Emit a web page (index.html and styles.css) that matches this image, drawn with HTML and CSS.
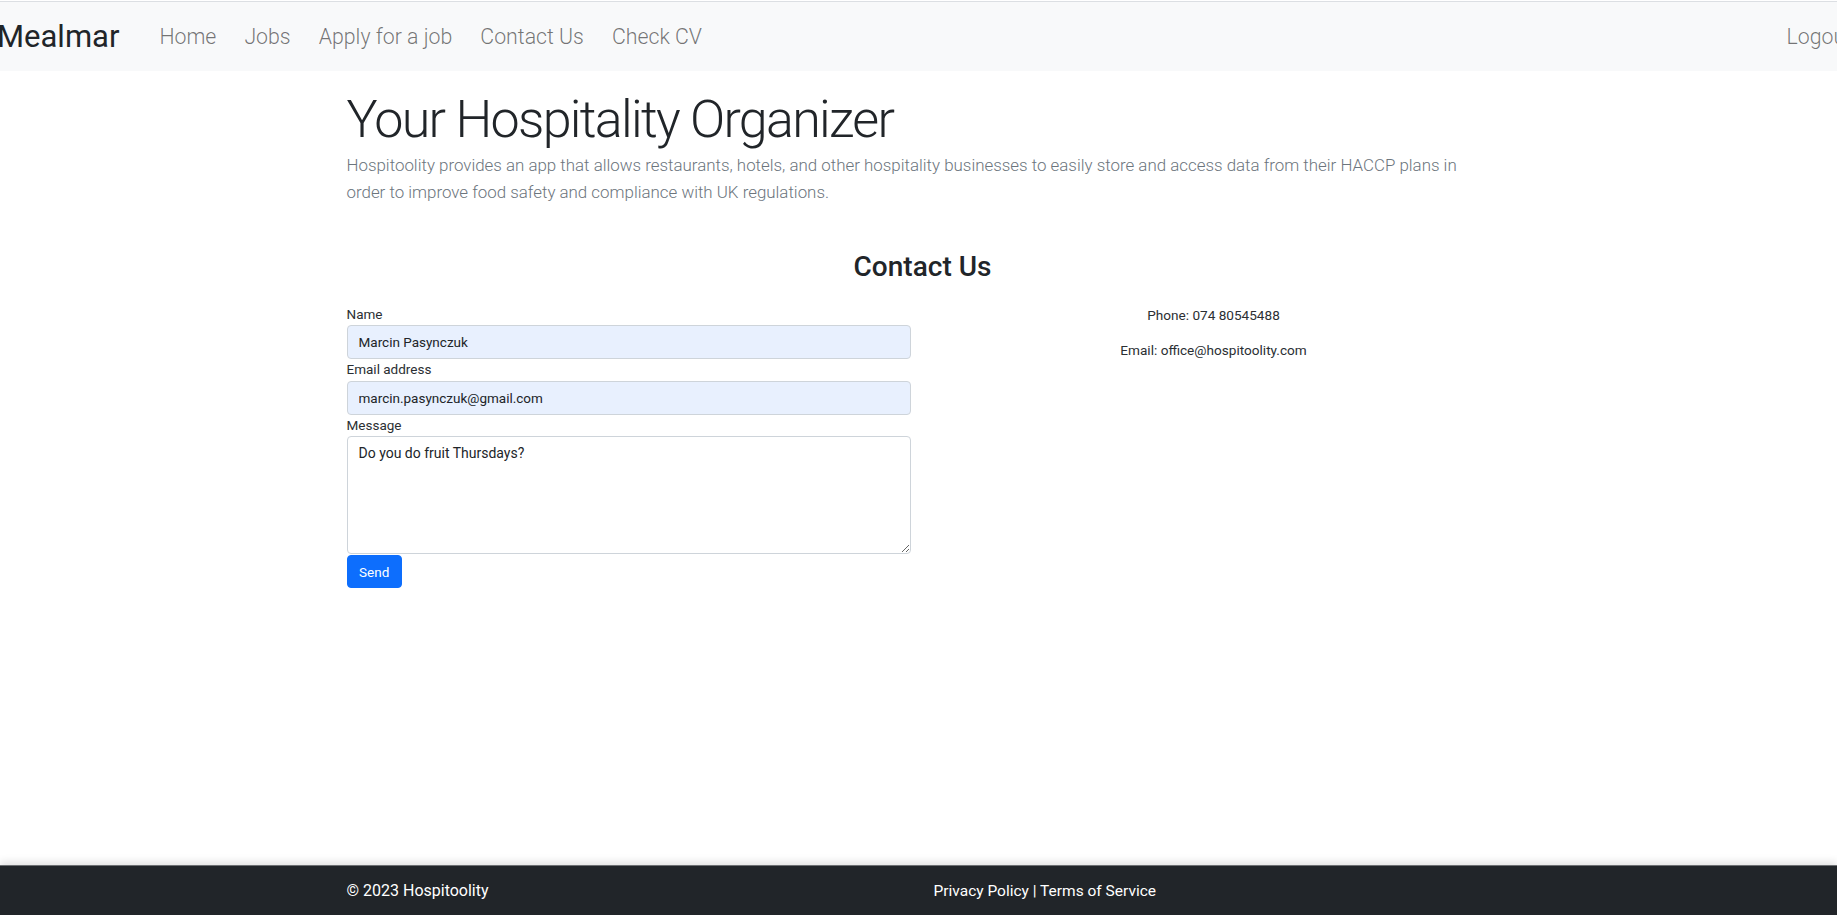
FILE: index.html
```html
<!DOCTYPE html>
<html lang="en">
<head>
<meta charset="utf-8">
<title>Hospitoolity - Contact Us</title>
<link rel="stylesheet" href="styles.css">
</head>
<body>
<nav class="navbar">
  <div class="nav-inner">
    <a class="brand" href="#">Mealmar</a>
    <ul class="nav-links">
      <li><a href="#">Home</a></li>
      <li><a href="#">Jobs</a></li>
      <li><a href="#">Apply for a job</a></li>
      <li><a href="#">Contact Us</a></li>
      <li><a href="#">Check CV</a></li>
    </ul>
    <a class="logout" href="#">Logout</a>
  </div>
</nav>

<main class="container">
  <header class="hero">
    <h1 class="hero-title">Your Hospitality Organizer</h1>
    <p class="lead">Hospitoolity provides an app that allows restaurants, hotels, and other hospitality businesses to easily store and access data from their HACCP plans in<br>order to improve food safety and compliance with UK regulations.</p>
  </header>

  <section class="contact">
    <h2 class="contact-title">Contact Us</h2>
    <div class="contact-row">
      <form class="contact-form">
        <label class="form-label" for="name">Name</label>
        <input class="form-control autofilled" id="name" type="text" value="Marcin Pasynczuk">
        <label class="form-label" for="email">Email address</label>
        <input class="form-control autofilled" id="email" type="email" value="marcin.pasynczuk@gmail.com">
        <label class="form-label" for="message">Message</label>
        <textarea class="form-control message" id="message">Do you do fruit Thursdays?</textarea>
        <button class="btn-send" type="button">Send</button>
      </form>
      <div class="contact-info">
        <p>Phone: 074 80545488</p>
        <p>Email: office@hospitoolity.com</p>
      </div>
    </div>
  </section>
</main>

<footer class="footer">
  <div class="container footer-inner">
    <span class="copyright">© 2023 Hospitoolity</span>
    <span class="legal">Privacy Policy | Terms of Service</span>
  </div>
</footer>
</body>
</html>
```

FILE: styles.css
```css
* { box-sizing: border-box; }

html, body { height: 100%; }

body {
  margin: 0;
  padding-top: 1px;
  font-family: Roboto, "Noto Sans", "Liberation Sans", sans-serif;
  color: #212529;
  background: #fff;
  display: flex;
  flex-direction: column;
  min-height: 100vh;
  overflow: hidden;
}

a { text-decoration: none; }

/* Navbar */
.navbar {
  background: #f8f9fa;
  border-top: 1px solid #dcdfe3;
  height: 70px;
  overflow: hidden;
  flex-shrink: 0;
}

.nav-inner {
  height: 100%;
  display: flex;
  align-items: center;
  margin-left: -3px;
  margin-right: -29px;
}

.brand {
  font-size: 31px;
  color: #212529;
  margin-right: 26px;
}

.nav-links {
  display: flex;
  list-style: none;
  margin: 0;
  padding: 0;
  flex: 1;
}

.nav-links a,
.logout {
  display: block;
  font-size: 21.3px;
  color: rgba(0, 0, 0, 0.55);
  padding: 8px 14px;
  font-weight: 300;
}

/* Container */
.container {
  width: 1152px;
  margin-left: calc((100% - 1152px) / 2 + 4px);
}

.hero-title {
  font-size: 52px;
  font-weight: 300;
  line-height: 1.2;
  margin: 18px 0 0;
  color: #212529;
  letter-spacing: -1.7px;
}

.lead {
  font-size: 16.9px;
  font-weight: 300;
  line-height: 27px;
  color: #6c757d;
  margin: 1px 0 0;
}

.contact-title {
  text-align: center;
  font-size: 28px;
  font-weight: 500;
  line-height: 1.2;
  margin: 44px 0 20px;
}

.contact-row {
  display: grid;
  grid-template-columns: 1fr 1fr;
  column-gap: 12px;
}

.contact-form {
  display: flex;
  flex-direction: column;
  align-items: flex-start;
  width: 564px;
}

.form-label {
  font-size: 13.5px;
  line-height: 21.5px;
  color: #2b2f33;
}

.form-control {
  width: 100%;
  height: 34px;
  padding: 0 11px;
  font: 13.5px Roboto, "Noto Sans", sans-serif;
  color: #212529;
  background: #fff;
  border: 1px solid #ced4da;
  border-radius: 4px;
  outline: none;
}

.form-control.autofilled {
  background: #e8f0fe;
}

.form-control.message {
  height: 118px;
  padding: 7px 11px;
  font-size: 14px;
  line-height: 19.5px;
  resize: vertical;
}

.btn-send {
  margin-top: 1px;
  height: 33px;
  padding: 0 11.5px;
  font: 13.5px Roboto, "Noto Sans", sans-serif;
  color: #fff;
  background: #0d6efd;
  border: 1px solid #0d6efd;
  border-radius: 4px;
}

.contact-info {
  text-align: center;
  padding-top: 2px;
  font-size: 13.6px;
  line-height: 19.5px;
  color: #2b2f33;
}

.contact-info p {
  margin: 0 0 16px;
}

/* Footer */
.footer {
  margin-top: auto;
  height: 50px;
  flex-shrink: 0;
  background: #212529;
  color: #fff;
  box-shadow: 0 -3px 8px rgba(0, 0, 0, 0.12);
  border-top: 1px solid #6c6f72;
}

.footer-inner {
  height: 100%;
  display: flex;
  align-items: center;
  font-size: 15.5px;
}

.copyright {
  width: 587px;
  font-size: 16px;
}
```
